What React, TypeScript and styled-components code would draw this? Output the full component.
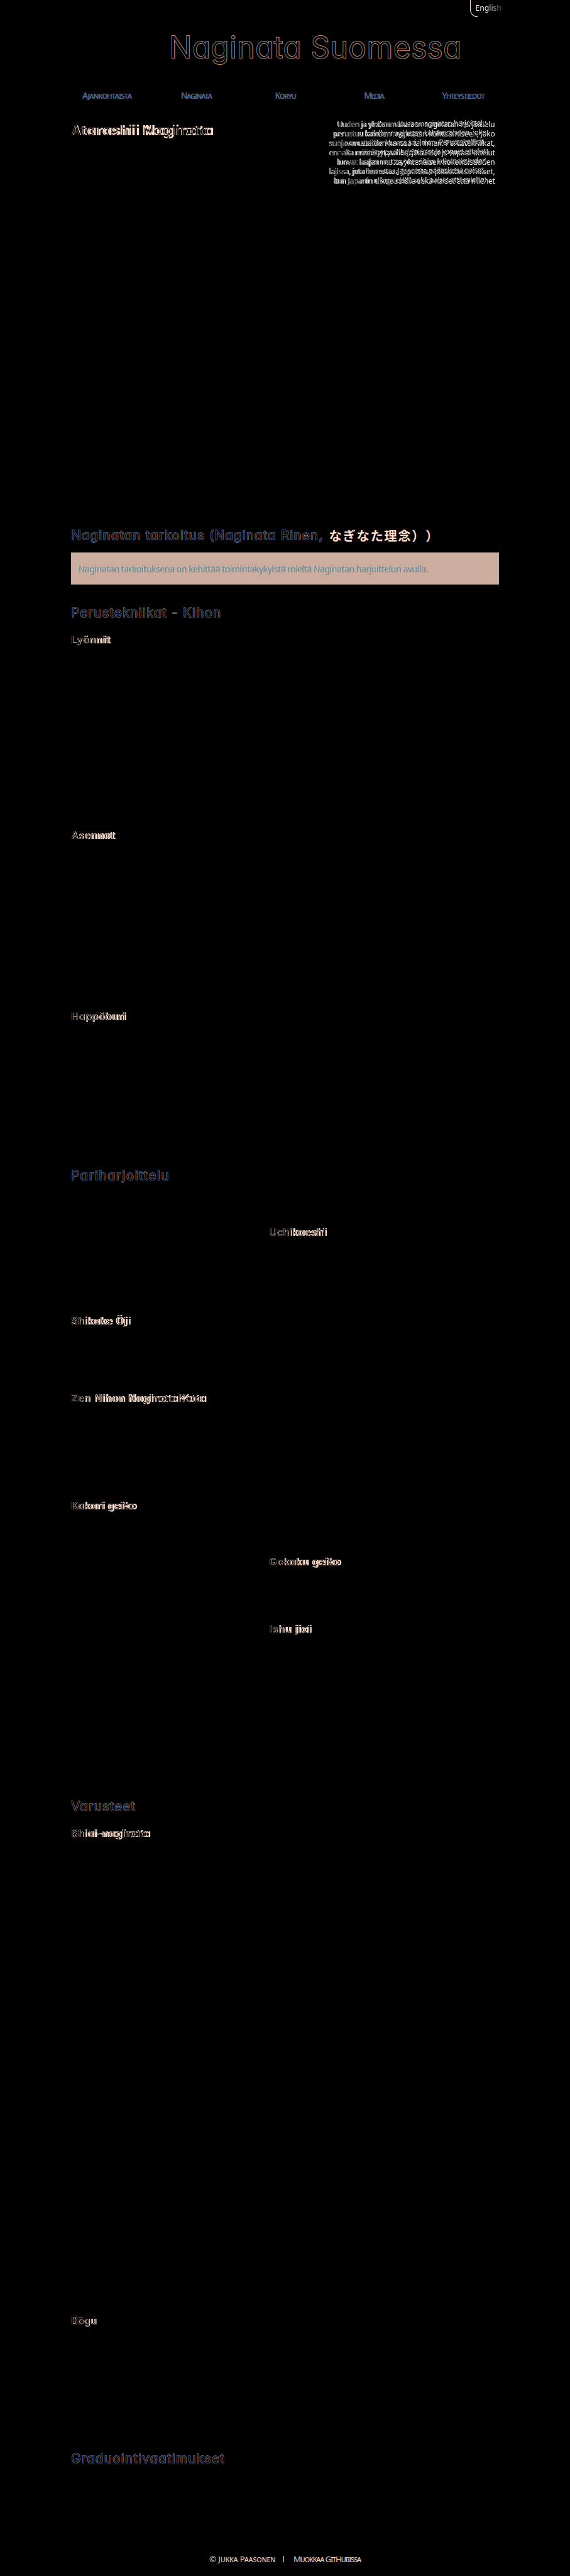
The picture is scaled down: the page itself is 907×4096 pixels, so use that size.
import React, { useLayoutEffect, useRef, useState } from 'react';
import styled, { createGlobalStyle, css } from 'styled-components';

const px = (n: number) => `${(n * 907) / 1024}px`;
const peach = '#fcdccb';
const textFont = "'Noto Sans', 'Open Sans', sans-serif";

const Global = createGlobalStyle`
  html, body { margin: 0; background: #000; }
  body {
    font-family: Inter, 'Noto Sans', 'Noto Sans CJK JP', sans-serif;
    font-feature-settings: 'cv11' 1;
    color: ${peach};
  }
  h1, h2, h3, p { margin: 0; font-weight: 400; }
`;

const Page = styled.div`
  position: relative;
  height: 4096px;
  overflow: hidden;
  background: #000;
`;

const Language = styled.a`
  position: absolute;
  top: 0;
  left: ${px(844)};
  box-sizing: border-box;
  width: ${px(60)};
  height: ${px(31)};
  padding-left: ${px(10)};
  font-family: ${textFont};
  font-size: ${px(14)};
  line-height: ${px(29)};
  &::before {
    content: '';
    position: absolute;
    top: -4px;
    left: 0;
    width: ${px(14)};
    bottom: 0;
    box-sizing: border-box;
    border: solid ${peach};
    border-width: 0 0 1.8px 1.8px;
    border-bottom-left-radius: ${px(13)};
  }
`;

const LanguageText = styled.span`
  color: transparent;
  background: linear-gradient(90deg, #fff4ee 50%, #b0b0c0 70%, #6a3420 100%);
  background-clip: text;
  -webkit-background-clip: text;
`;

const Header = styled.header`
  display: flex;
  justify-content: center;
  align-items: center;
  box-sizing: border-box;
  height: ${px(150)};
  padding: ${px(21)} 0 0 ${px(110)};
`;

const outlined = css`
  color: #000;
  paint-order: stroke fill;
`;

const Title = styled.h1`
  ${outlined}
  font-size: ${px(53.5)};
  line-height: ${px(82)};
  font-weight: 300;
  white-space: nowrap;
  -webkit-text-stroke: 2px #d8844c;
  text-shadow: -0.8px 0 #2f78b8, 0 -0.5px #f0d0b8;
`;

const Nav = styled.nav`
  display: flex;
  height: ${px(43)};
  align-items: center;
  padding-left: ${px(148)};
`;

const NavLink = styled.a<{ $cell: number }>`
  flex: none;
  width: ${(p) => px(p.$cell)};
  font-family: ${textFont};
  font-size: ${px(15.5)};
  font-variant: small-caps;
  line-height: ${px(20)};
  color: #4476a8;
  text-shadow: 0.6px 0 #6a3430;
`;

const Main = styled.main`
  display: flex;
  flex-direction: column;
  align-items: flex-start;
  width: ${px(768)};
  margin-left: ${px(128)};
`;

const Intro = styled.section`
  display: flex;
  justify-content: space-between;
  align-items: flex-start;
  box-sizing: border-box;
  width: ${px(761)};
  height: ${px(752.5)};
  padding-top: ${px(21.5)};
`;

const doubled = css`
  position: relative;
  white-space: nowrap;
  isolation: isolate;
  color: ${peach};
  &::after {
    content: attr(data-text);
    position: absolute;
    top: 0;
    left: 0;
    font-weight: 400;
    mix-blend-mode: difference;
  }
`;

const IntroTitle = styled.h2`
  ${doubled}
  margin-top: ${px(4.5)};
  font-size: ${px(24.5)};
  line-height: ${px(30)};
  font-weight: 700;
`;

const IntroText = styled.div`
  display: flex;
  flex-direction: column;
  align-items: flex-end;
`;

const IntroLine = styled.p`
  ${doubled}
  font-family: ${textFont};
  font-size: ${px(13.5)};
  line-height: ${px(17)};
  color: #f4f0ec;
  &::after {
    transform-origin: 0 60%;
    transform: translateX(1.5px) rotate(-0.6deg) scaleX(0.94);
  }
`;

const SectionTitle = styled.h2<{ $gap: number }>`
  ${outlined}
  display: flex;
  margin-top: ${(p) => px(p.$gap)};
  font-size: ${px(22.5)};
  line-height: ${px(32)};
  height: ${px(30)};
  font-weight: 300;
  white-space: nowrap;
  -webkit-text-stroke: 1.5px #527ab0;
  text-shadow: 0.8px 0 #96483a, 0 -0.5px #c09880;
`;

const Japanese = styled.span`
  margin-left: ${px(10)};
  color: ${peach};
  font-family: 'Noto Sans CJK JP', sans-serif;
  font-size: ${px(23)};
  font-weight: 700;
  text-spacing-trim: space-all;
  -webkit-text-stroke: 0;
  text-shadow: none;
`;

const Quote = styled.div`
  display: flex;
  align-items: center;
  box-sizing: border-box;
  width: 100%;
  height: ${px(59)};
  margin-top: ${px(15.5)};
  padding: ${px(1)} 0 0 ${px(12)};
  border: solid #705a50;
  border-width: 1px 0;
  background: #ccad9d;
`;

const QuoteText = styled.p`
  font-family: ${textFont};
  font-size: ${px(16)};
  white-space: nowrap;
  color: #7c8c9c;
  text-shadow: -0.8px 0 #a4e4c0, 0.8px 0 #b0708c;
`;

const SubTitle = styled.h3<{ $gap: number; $right?: boolean }>`
  ${doubled}
  margin-top: ${(p) => px(p.$gap)};
  margin-left: ${(p) => (p.$right ? px(356) : 0)};
  font-size: ${px(17.5)};
  line-height: ${px(25)};
  height: ${px(24)};
  font-weight: 700;
`;

const Footer = styled.footer`
  display: flex;
  align-items: center;
  height: ${px(24)};
  margin-top: ${px(154.5)};
  padding-left: ${px(376)};
  font-family: ${textFont};
  font-size: ${px(15)};
  font-variant: small-caps;
  color: #e4ccbe;
  white-space: nowrap;
`;

const Divider = styled.span`
  width: 1px;
  height: ${px(12)};
  margin: 0 ${px(17)} 0 ${px(14)};
  background: ${peach};
`;

type FitProps = { width: number; shadow?: number; children: string };

/* Tracks a run of text so that it fills the given measure; the overlaid copy is set tighter. */
function Fit({ width, shadow = 0, children }: FitProps) {
  const ref = useRef<HTMLSpanElement>(null);
  const [spacing, setSpacing] = useState(0);
  useLayoutEffect(() => {
    const run = ref.current;
    const host = run?.parentElement;
    if (!run || !host) return;
    const natural = run.getBoundingClientRect().width;
    const next = ((width * 907) / 1024 - natural) / children.length;
    setSpacing(next);
    host.style.letterSpacing = `${next - shadow}px`;
  }, [width, shadow, children]);
  return <span ref={ref} style={{ letterSpacing: spacing }}>{children}</span>;
}

const links: [string, number, number][] = [
  ['Ajankohtaista', 88, 177],
  ['Naginata', 55, 169],
  ['Koryu', 37, 160],
  ['Media', 35, 140],
  ['Yhteystiedot', 76, 90],
];

const intro: [string, number][] = [
  ['Uuden ja yhdenmukaisen naginatan harjoittelu', 284],
  ['perustuu kahden naginatan kohtaamiseen, joko', 291],
  ['suojavarusteiden kanssa tai ilman. Perustekniikat,', 298],
  ['ennalta määrätyt pariharjoitukset ja vapaat ottelut', 298],
  ['luovat laajan mutta yhtenäisen kokonaisuuden', 284],
  ['lajissa, jota harrastaa Japanissa pääasiassa naiset,', 298],
  ['kun Japanin ulkopuolella sekä naiset että miehet', 290],
];

function Heading({ text, width, gap }: { text: string; width: number; gap: number }) {
  return <SectionTitle $gap={gap}><Fit width={width}>{text}</Fit></SectionTitle>;
}

function Sub({ text, width, gap, right }: { text: string; width: number; gap: number; right?: boolean }) {
  return (
    <SubTitle $gap={gap} $right={right} data-text={text}>
      <Fit width={width} shadow={0.1}>{text}</Fit>
    </SubTitle>
  );
}

export default function App() {
  return (
    <Page>
      <Global />
      <Language><LanguageText><Fit width={47}>English</Fit></LanguageText></Language>
      <Header><Title><Fit width={526}>Naginata Suomessa</Fit></Title></Header>
      <Nav>
        {links.map(([label, width, cell]) => (
          <NavLink key={label} $cell={cell}><Fit width={width}>{label}</Fit></NavLink>
        ))}
      </Nav>
      <Main>
        <Intro>
          <IntroTitle data-text="Atarashii Naginata"><Fit width={258}>Atarashii Naginata</Fit></IntroTitle>
          <IntroText>
            {intro.map(([line, width]) => (
              <IntroLine key={line} data-text={line}><Fit width={width}>{line}</Fit></IntroLine>
            ))}
          </IntroText>
        </Intro>
        <SectionTitle $gap={0}>
          <Fit width={453}>Naginatan tarkoitus (Naginata Rinen,</Fit>
          <Japanese>なぎなた理念））</Japanese>
        </SectionTitle>
        <Quote>
          <QuoteText>
            <Fit width={628}>Naginatan tarkoituksena on kehittää toimintakykyistä mieltä Naginatan harjoittelun avulla.</Fit>
          </QuoteText>
        </Quote>
        <Heading text="Perustekniikat - Kihon" width={270} gap={33.5} />
        <Sub text="Lyönnit" width={73} gap={23} />
        <Sub text="Asennot" width={81} gap={328} />
        <Sub text="Happōburi" width={101} gap={301} />
        <Heading text="Pariharjoittelu" width={177} gap={257} />
        <Sub text="Uchikaeshi" width={105} gap={76} right />
        <Sub text="Shikake Ōji" width={109} gap={135} />
        <Sub text="Zen Nihon Naginata Kata" width={245} gap={115} />
        <Sub text="Kakari geiko" width={120} gap={169} />
        <Sub text="Gokaku geiko" width={131} gap={77} right />
        <Sub text="Ishu jiai" width={78} gap={96} right />
        <Heading text="Varusteet" width={116} gap={290} />
        <Sub text="Shiai-naginata" width={144} gap={23} />
        <Sub text="Bōgu" width={47} gap={851} />
        <Heading text="Graduointivaatimukset" width={276} gap={219} />
      </Main>
      <Footer>
        <span><Fit width={119}>© Jukka Paasonen</Fit></span>
        <Divider />
        <span><Fit width={121}>Muokkaa GitHubissa</Fit></span>
      </Footer>
    </Page>
  );
}
